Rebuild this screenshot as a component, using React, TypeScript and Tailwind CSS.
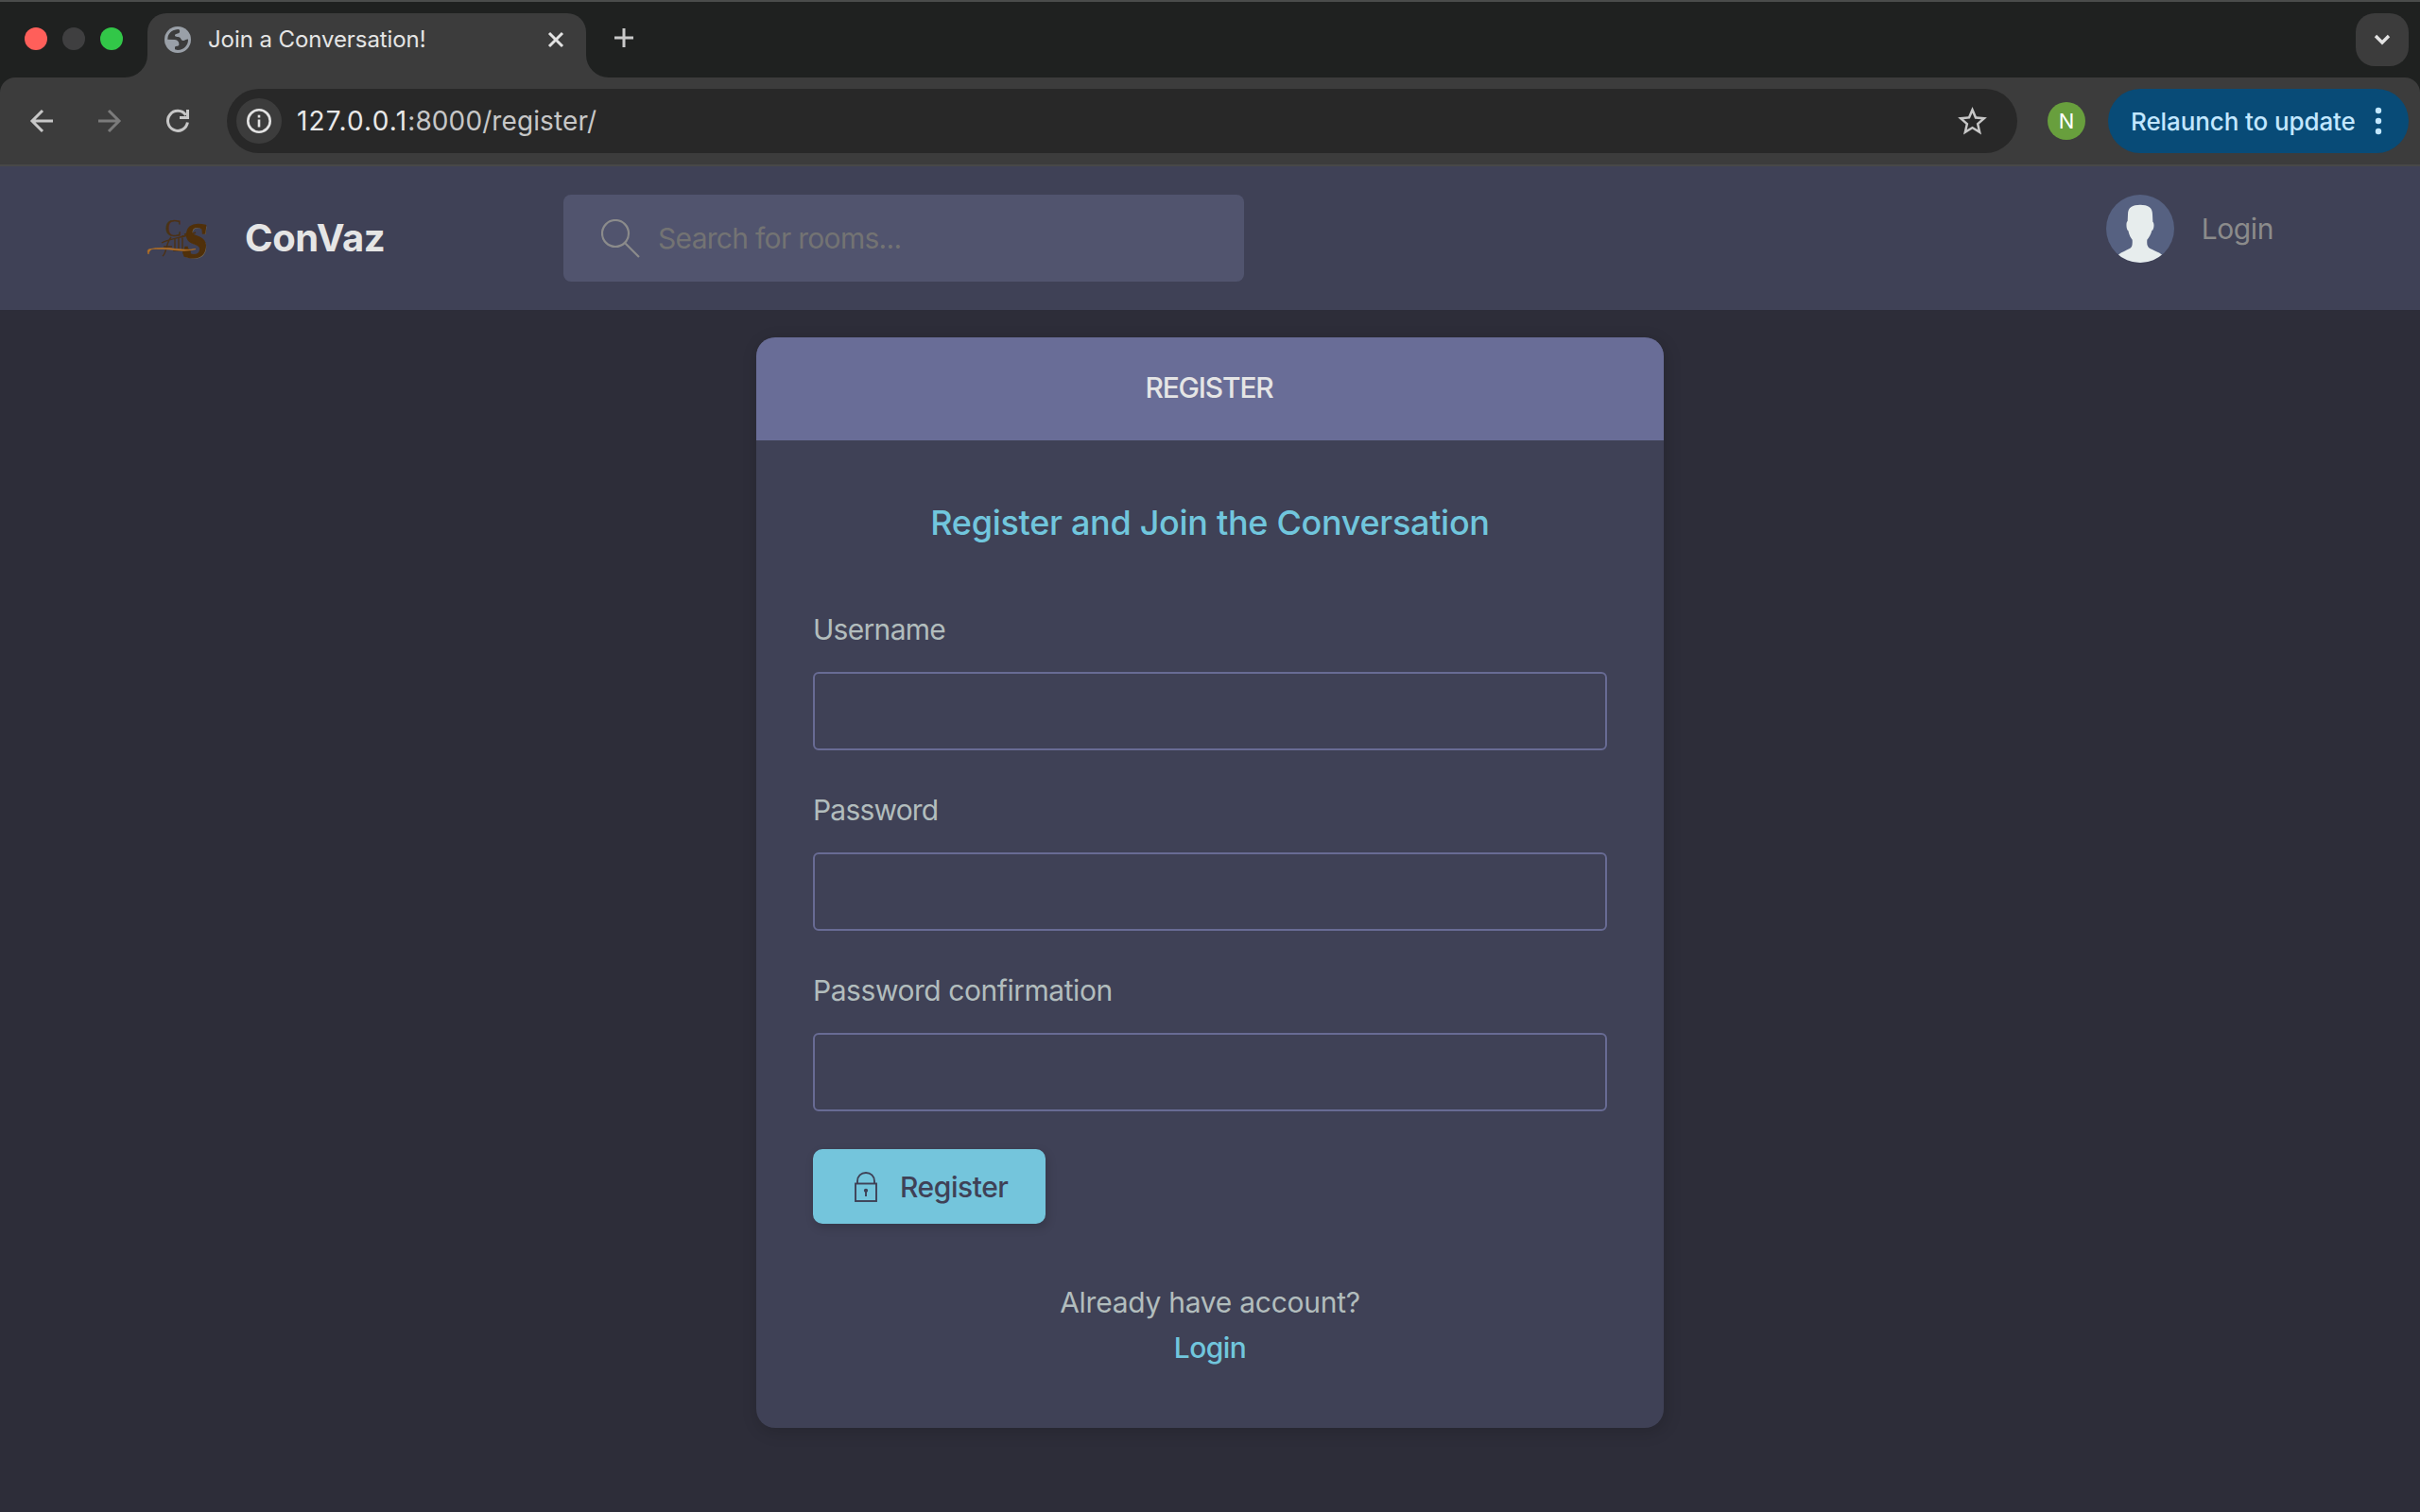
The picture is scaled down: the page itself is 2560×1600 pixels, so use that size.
function TabFavicon() {
  return (
    <svg width="28" height="28" viewBox="0 0 84 84" className="shrink-0">
      <circle cx="42" cy="42" r="42" fill="#9aa0a8" />
      <path
        d="M10 38 C12 20 27 9 45 9 C49 11 50 18 46 21 C40 24 33 23 33 29 C34 34 46 31 50 36 C53 41 54 46 61 45 C67 44 70 40 75 41 C76 58 62 75 42 75 L33 73 V65 C37 62 46 64 46 58 C47 49 42 43 33 42 L10 41 Z"
        fill="#3c3c3c"
      />
      <path d="M33 33 H12 C15 22 24 14 33 12 C36 19 31 25 33 33 Z" fill="#3c3c3c" />
    </svg>
  );
}

function TabStrip() {
  return (
    <div className="flex h-[82px] border-t-2 border-[#4a4c4b] bg-[#1f2120]">
      <div className="flex h-[78px] w-[156px] items-center gap-4 pl-[26px]">
        <span className="size-6 rounded-full bg-[#ff5f5a]" />
        <span className="size-6 rounded-full bg-[#3f3f40]" />
        <span className="size-6 rounded-full bg-[#32c748]" />
      </div>
      <div className="relative mt-3 flex h-[68px] w-[464px] rounded-t-[20px] bg-[#3c3c3c] pl-[18px] pr-[21px]">
        <svg className="absolute bottom-0 -left-6" width="24" height="24" viewBox="0 0 24 24">
          <path d="M24 0 V24 H0 A24 24 0 0 0 24 0Z" fill="#3c3c3c" />
        </svg>
        <svg className="absolute bottom-0 -right-6" width="24" height="24" viewBox="0 0 24 24">
          <path d="M0 0 V24 H24 A24 24 0 0 1 0 0Z" fill="#3c3c3c" />
        </svg>
        <div className="flex h-14 w-full items-center">
          <TabFavicon />
          <span className="ml-[18px] text-[24px] leading-[30px] tracking-[-0.08px] text-[#e5e5e5]">Join a Conversation!</span>
          <svg className="ml-auto" width="22" height="22" viewBox="0 0 22 22" fill="none" stroke="#e3e3e3" strokeWidth="3">
            <path d="M4 4 L18 18 M18 4 L4 18" />
          </svg>
        </div>
      </div>
      <svg className="mt-[27px] ml-[29px]" width="22" height="22" viewBox="0 0 22 22" fill="none" stroke="#c9c9c9" strokeWidth="3">
        <path d="M11 1 V21 M1 11 H21" />
      </svg>
      <div className="mt-3 mr-3 ml-auto flex size-14 items-center justify-center rounded-[20px] bg-[#3c3c3c]">
        <svg width="20" height="14" viewBox="0 0 20 14" fill="none" stroke="#e3e3e3" strokeWidth="3.4">
          <path d="M3 3 L10 10 L17 3" />
        </svg>
      </div>
    </div>
  );
}

function Toolbar() {
  return (
    <div className="bg-[#1f2120]">
      <div className="flex h-[94px] items-center rounded-t-[16px] border-b-2 border-[#484848] bg-[#3c3c3c]">
        <svg className="ml-7" width="32" height="32" viewBox="0 0 32 32" fill="none" stroke="#c7c7c7" strokeWidth="3">
          <path d="M28 16 H6 M17 5 L6 16 L17 27" />
        </svg>
        <svg className="ml-10" width="32" height="32" viewBox="0 0 32 32" fill="none" stroke="#7b7b7b" strokeWidth="3">
          <path d="M4 16 H26 M15 5 L26 16 L15 27" />
        </svg>
        <svg className="ml-10" width="32" height="32" viewBox="0 0 32 32" fill="none" stroke="#c7c7c7" strokeWidth="3">
          <path d="M26.4 17.5 A10.5 10.5 0 1 1 24.6 9.8" />
          <path d="M26.5 4 V12.5 H18" />
        </svg>
        <div className="ml-9 flex h-[68px] w-[1894px] items-center rounded-full bg-[#282828] pr-8 pl-[10px]">
          <div className="flex size-12 items-center justify-center rounded-full bg-[#3c3c3c]">
            <svg width="26" height="26" viewBox="0 0 26 26">
              <circle cx="13" cy="13" r="11.7" fill="none" stroke="#e3e3e3" strokeWidth="2.6" />
              <rect x="11.7" y="11.5" width="2.6" height="8" fill="#e3e3e3" />
              <rect x="11.7" y="6.7" width="2.6" height="2.8" fill="#e3e3e3" />
            </svg>
          </div>
          <span className="ml-4 text-[28px] leading-9 text-[#c7c7c7]">
            <span className="tracking-[1.2px] text-[#e8e8e8]">127.0.0.1</span>
            <span className="tracking-[0.1px]">:8000/register/</span>
          </span>
          <svg className="-mr-[3px] ml-auto" width="37" height="37" viewBox="0 0 24 24" fill="#c7c7c7">
            <path d="M22 9.24l-7.19-.62L12 2 9.19 8.63 2 9.24l5.46 4.73L5.82 21 12 17.27 18.18 21l-1.63-7.03L22 9.24zM12 15.4l-3.76 2.27 1-4.28-3.32-2.88 4.38-.38L12 6.1l1.71 4.04 4.38.38-3.32 2.88 1 4.28L12 15.4z" />
          </svg>
        </div>
        <div className="ml-8 flex size-10 items-center justify-center rounded-full bg-[#689f3d] text-[22px] leading-none text-white">
          N
        </div>
        <div className="ml-6 flex h-[68px] w-[318px] items-center rounded-full bg-[#084b77] pl-6 text-[26px] font-medium text-[#c2e7ff]">
          <span className="pt-px leading-8 tracking-[-0.1px] whitespace-nowrap">Relaunch to update</span>
          <svg className="ml-5" width="8" height="30" viewBox="0 0 8 30" fill="#c2e7ff">
            <circle cx="4" cy="4" r="3.2" />
            <circle cx="4" cy="15" r="3.2" />
            <circle cx="4" cy="26" r="3.2" />
          </svg>
        </div>
      </div>
    </div>
  );
}

function Logo() {
  return (
    <svg width="75" height="92" viewBox="0 -20 75 92" fill="none" className="overflow-visible">
      <text x="25" y="23.5" fontFamily="Liberation Serif" fontSize="26" fill="#4d3113" stroke="#4d3113" strokeWidth="0.4">
        C
      </text>
      <path
        d="M22 45 C27 41 24 34 31 25 M21 31 C30 26 46 25 57 20 M35 27 V39 M39 25 V39 M43 23 V39 M23 35 H32 M33 39 H45 M45 22 L52 20"
        stroke="#4d3113"
        strokeWidth="1.4"
      />
      <g transform="translate(43 46) skewX(-6) scale(0.88 1)" fontFamily="Liberation Serif" fontSize="52" fontWeight="700">
        <text x="0.8" y="1" fill="#77705f">S</text>
        <text x="-0.6" y="0" fill="#50300a" stroke="#50300a" strokeWidth="1.8">S</text>
      </g>
      <circle cx="47.5" cy="41" r="4.4" fill="#50300a" />
      <path
        d="M7 43 C4 36 10 37.5 18 37.5 C32 37 43 41.5 57 37.5 C43 40 32 35.5 18 36.5 C11 36.5 8 38 7 43Z"
        fill="#b87425"
        stroke="#a76a28"
        strokeWidth="0.8"
      />
    </svg>
  );
}

function Avatar() {
  return (
    <svg width="72" height="72" viewBox="0 0 216 216" className="rounded-full bg-[#566181]">
      <path
        d="M108 32 C84 32 69 40 69 62 L68 84 C62 88 64 112 70 114 C73 128 78 138 83 143 C84 160 82 166 76 170 C64 177 50 181 38 191 V216 H178 V191 C166 181 150 177 138 170 C130 165 129 158 130 143 C136 137 142 126 145 114 C152 112 154 90 148 86 L147 62 C147 40 132 32 108 32Z"
        fill="#e7eded"
      />
    </svg>
  );
}

function SiteHeader() {
  return (
    <header className="flex h-[152px] items-center bg-[#3f4156] pr-[155px] pl-[150px]">
      <Logo />
      <span className="ml-[34px] w-[337px] text-[40px] leading-[52px] font-bold tracking-[-0.4px] text-[#e5e5e5]">ConVaz</span>
      <div className="flex h-[92px] w-[720px] items-center rounded-lg bg-[#51546e] pl-10">
        <svg width="41" height="41" viewBox="0 0 41 41" fill="none" stroke="#8b8b8b" strokeWidth="2.2">
          <circle cx="15" cy="15" r="14" />
          <path d="M25 25 L40 40" />
        </svg>
        <span className="ml-[19px] text-[30px] leading-10 tracking-[-0.7px] text-[#737373]">Search for rooms...</span>
      </div>
      <div className="mb-5 ml-auto flex items-center">
        <Avatar />
        <span className="-mt-px ml-[29px] text-[30px] leading-10 tracking-[-0.4px] text-[#8b8b8b]">Login</span>
      </div>
    </header>
  );
}

function Field({ label, tracking }: { label: string; tracking: string }) {
  return (
    <div className="mb-[39px]">
      <div className={`h-12 text-[30px] leading-[48px] text-[#b2bdbd] ${tracking}`}>{label}</div>
      <div className="mt-[21px] h-[83px] rounded-[6px] border-2 border-[#686b94]" />
    </div>
  );
}

function RegisterCard() {
  return (
    <section className="mx-auto mt-[29px] h-[1154px] w-[960px] overflow-hidden rounded-[20px] bg-[#3f4156] shadow-[2px_4px_16px_2px_rgba(0,0,0,0.13)]">
      <div className="h-[109px] bg-[#696d97] pt-[29px] text-center text-[30px] leading-[48px] font-medium tracking-[-1.2px] text-[#e5e5e5]">
        <span className="-ml-[2px]">REGISTER</span>
      </div>
      <div className="px-[60px] pt-[63px]">
        <h2 className="mb-[65px] text-center text-[36px] leading-[48px] font-medium tracking-[-0.3px] text-[#71c6dd]">
          Register and Join the Conversation
        </h2>
        <Field label="Username" tracking="tracking-[-0.7px]" />
        <Field label="Password" tracking="tracking-[-0.8px]" />
        <Field label="Password confirmation" tracking="tracking-[-0.45px]" />
        <div className="-mt-px pt-[2px]">
          <button className="flex h-[79px] w-[246px] items-center rounded-[10px] bg-[#74c5dc] pl-[43px] shadow-[2px_4px_10px_1px_rgba(0,0,0,0.13)]">
            <svg width="26" height="34" viewBox="0 0 26 34" fill="none" stroke="#3f4156" strokeWidth="1.9">
              <rect x="2" y="13.5" width="22" height="18.5" />
              <path d="M4 13.5 V11 C4 5.5 8 2 13 2 C18 2 22 5.5 22 11 V13.5" />
              <path d="M13 21 V27" />
              <circle cx="13" cy="20.8" r="1.2" fill="#3f4156" />
            </svg>
            <span className="ml-[23px] text-[30px] leading-10 font-medium tracking-[-0.45px] text-[#3f4156]">Register</span>
          </button>
        </div>
        <div className="mt-[59px] text-center text-[30px] leading-[48px] tracking-[-0.27px]">
          <p className="text-[#b2bdbd]">Already have account?</p>
          <a className="block font-medium tracking-[-0.6px] text-[#71c6dd]">Login</a>
        </div>
      </div>
    </section>
  );
}

export default function App() {
  return (
    <div className="h-[1600px] w-[2560px] overflow-hidden bg-[#2d2d39] font-['Inter','Liberation_Sans',sans-serif]">
      <TabStrip />
      <Toolbar />
      <SiteHeader />
      <RegisterCard />
    </div>
  );
}
